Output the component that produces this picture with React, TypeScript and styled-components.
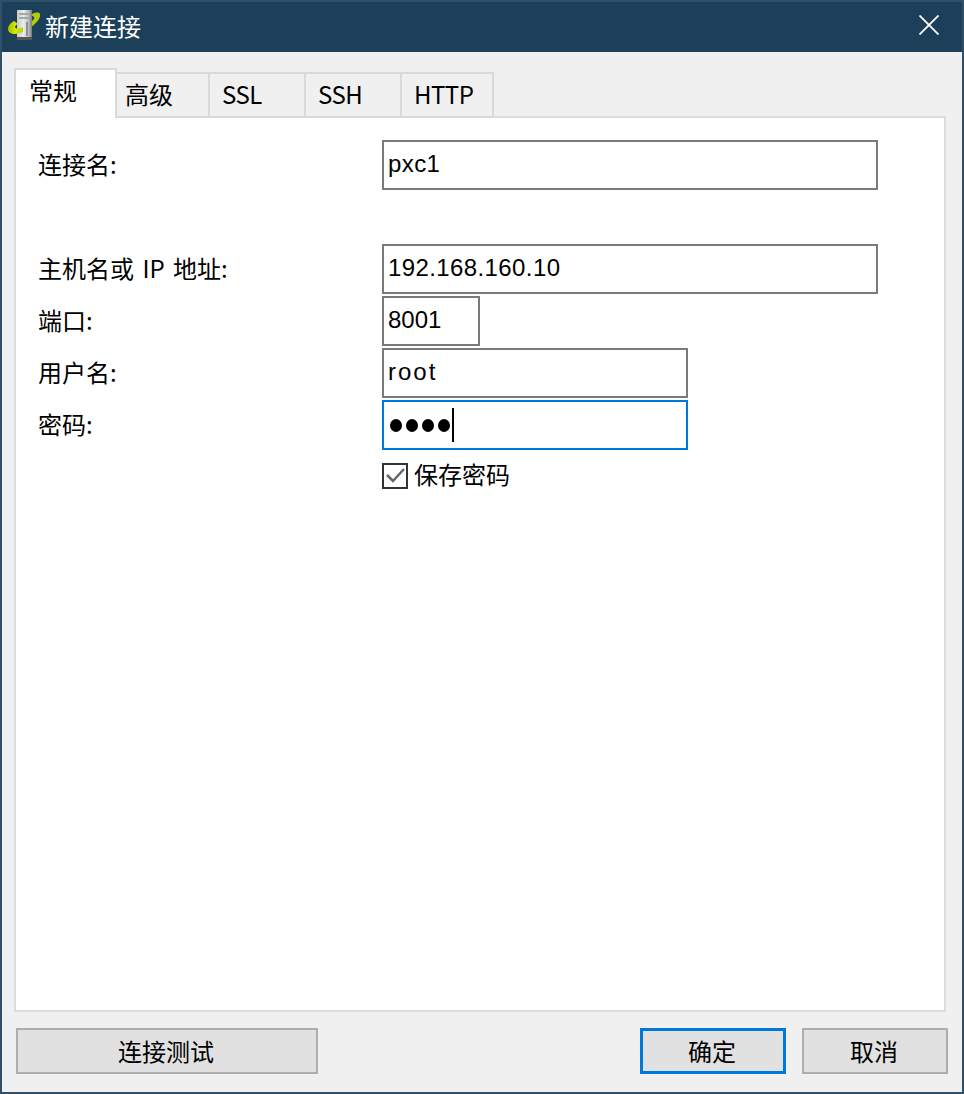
import React from 'react';
import styled, { createGlobalStyle } from 'styled-components';

const Global = createGlobalStyle`
  html, body {
    margin: 0;
    padding: 0;
    background: #2f5068;
  }
  * {
    box-sizing: border-box;
  }
`;

const fontStack = `"Noto Sans CJK SC", "Liberation Sans", sans-serif`;

const Window = styled.div`
  width: 964px;
  height: 1094px;
  display: flex;
  flex-direction: column;
  padding: 0 2px 2px 2px;
  background: #2f5068;
  border-top: 2px solid #2f5068;
  font-family: ${fontStack};
  font-size: 24px;
  color: #000;
`;

const TitleBar = styled.div`
  height: 50px;
  flex: none;
  display: flex;
  align-items: center;
  padding: 0 23px 0 6px;
  background: #1c405a;
  color: #fff;
`;

const IconSlot = styled.span`
  display: flex;
  margin-bottom: 4px;
`;

const TitleText = styled.span`
  margin: 0 0 2px 5px;
  font-size: 24px;
  line-height: 48px;
`;

const CloseButton = styled.button`
  margin: 0 0 4px auto;
  width: 20px;
  height: 20px;
  padding: 0;
  display: flex;
  border: 0;
  background: none;
`;

const Body = styled.div`
  flex: 1;
  display: flex;
  flex-direction: column;
  padding: 16px 16px 18px 12px;
  background: #f0f0f0;
`;

const TabBar = styled.div`
  display: flex;
  align-items: flex-end;
  height: 50px;
  flex: none;
  position: relative;
  z-index: 1;
`;

const Tab = styled.div<{ $width: number; $active?: boolean; $latin?: boolean }>`
  width: ${(p) => p.$width}px;
  height: ${(p) => (p.$active ? 50 : 46)}px;
  margin-left: -2px;
  padding: ${(p) => (p.$active ? '2px 0 0 13px' : p.$latin ? '2px 0 0 12px' : '2px 0 0 8px')};
  border: 2px solid #d9d9d9;
  border-bottom: ${(p) => (p.$active ? '0' : '2px solid #d9d9d9')};
  background: ${(p) => (p.$active ? '#fff' : '#f0f0f0')};
  line-height: 36px;
  letter-spacing: ${(p) => (p.$latin ? '-0.5px' : '0')};
  white-space: nowrap;
  &:first-child {
    margin-left: 0;
  }
  &:nth-child(2) {
    margin-left: 0;
    border-left: 0;
  }
`;

const Panel = styled.div`
  flex: 1;
  margin-top: -2px;
  padding: 22px 0 0 22px;
  border: 2px solid #dcdcdc;
  background: #fff;
`;

const Row = styled.div<{ $gapAfter?: number }>`
  display: flex;
  align-items: center;
  height: 50px;
  margin-bottom: ${(p) => p.$gapAfter ?? 2}px;
`;

const Label = styled.label`
  width: 344px;
  flex: none;
  padding-bottom: 2px;
  line-height: 48px;
  word-spacing: 3px;
`;

const Field = styled.div<{ $width: number; $focused?: boolean; $tracking?: number }>`
  width: ${(p) => p.$width}px;
  height: 50px;
  display: flex;
  align-items: center;
  padding: 0 4px 2px;
  border: 2px solid ${(p) => (p.$focused ? '#0078d7' : '#7a7a7a')};
  background: #fff;
  font-family: "Liberation Sans", sans-serif;
  font-size: 24px;
  letter-spacing: ${(p) => p.$tracking ?? 0}px;
`;

const Dot = styled.span`
  width: 12px;
  height: 13px;
  margin: 2px 4px 0 0;
  border-radius: 50%;
  background: #000;
  &:first-child {
    margin-left: 2px;
  }
`;

const Caret = styled.span`
  width: 2px;
  height: 34px;
  margin: 2px 0 0 -2px;
  background: #000;
`;

const CheckRow = styled.div`
  display: flex;
  align-items: center;
  margin: 12px 0 0 344px;
  height: 28px;
`;

const CheckBox = styled.span`
  width: 26px;
  height: 26px;
  flex: none;
  display: flex;
  border: 2px solid #333;
  background: #fff;
`;

const CheckLabel = styled.span`
  margin: 0 0 6px 6px;
`;

const Footer = styled.div`
  display: flex;
  margin-top: 16px;
  padding-left: 2px;
  margin-right: -2px;
  flex: none;
`;

const Button = styled.button<{ $width: number; $primary?: boolean }>`
  width: ${(p) => p.$width}px;
  height: 46px;
  padding: 0 2px 0 0;
  border: ${(p) => (p.$primary ? 3 : 2)}px solid ${(p) => (p.$primary ? '#0078d7' : '#adadad')};
  background: #e1e1e1;
  color: #000;
  font-family: ${fontStack};
  font-size: 24px;
  line-height: 1;
`;

const Spacer = styled.div`
  flex: 1;
`;

const CancelButton = styled(Button)`
  margin-left: 16px;
`;

const AppIcon = () => (
  <svg width="32" height="32" viewBox="0 0 32 32">
    <defs>
      <linearGradient id="srv" x1="0" x2="1" y1="0" y2="0">
        <stop offset="0" stopColor="#c9cbcb" />
        <stop offset="0.45" stopColor="#eceded" />
        <stop offset="0.8" stopColor="#b4b6b6" />
        <stop offset="1" stopColor="#77797a" />
      </linearGradient>
      <linearGradient id="ring" x1="0" x2="1" y1="0" y2="0">
        <stop offset="0" stopColor="#a6bd00" />
        <stop offset="0.5" stopColor="#d4ea00" />
        <stop offset="1" stopColor="#bcd200" />
      </linearGradient>
    </defs>
    <path d="M23 6 C27 3 31 3 32 5 C33 9 29 14 23 18 L23 13 C25 11 27 9 26 8Z" fill="#b5cb05" />
    <path d="M9 1 L24 1 L24 30 L9 30Z" fill="url(#srv)" />
    <rect x="9" y="28" width="15" height="3" fill="#55585a" />
    <rect x="11" y="4" width="11" height="2" fill="#a4a6a7" />
    <rect x="11" y="8" width="11" height="2" fill="#a4a6a7" />
    <rect x="18" y="13" width="2" height="14" fill="#8d9090" />
    <path d="M6 12 C2 14 0 17 0 20 C0 26 9 26 15 23 L15 18 C11 20 8 20 7 18 C7 17 8 16 10 15Z" fill="url(#ring)" />
  </svg>
);

const App = () => (
  <>
    <Global />
    <Window>
      <TitleBar>
        <IconSlot>
          <AppIcon />
        </IconSlot>
        <TitleText>新建连接</TitleText>
        <CloseButton aria-label="关闭">
          <svg width="20" height="20" viewBox="0 0 20 20">
            <path d="M0.5 0.5 L19.5 19.5 M19.5 0.5 L0.5 19.5" stroke="#fff" strokeWidth="1.8" />
          </svg>
        </CloseButton>
      </TitleBar>
      <Body>
        <TabBar>
          <Tab $width={103} $active>常规</Tab>
          <Tab $width={93}>高级</Tab>
          <Tab $width={98} $latin>SSL</Tab>
          <Tab $width={98} $latin>SSH</Tab>
          <Tab $width={94} $latin>HTTP</Tab>
        </TabBar>
        <Panel>
          <Row $gapAfter={54}>
            <Label>连接名:</Label>
            <Field $width={496} $tracking={0.4}>pxc1</Field>
          </Row>
          <Row>
            <Label>主机名或 IP 地址:</Label>
            <Field $width={496} $tracking={0.4}>192.168.160.10</Field>
          </Row>
          <Row>
            <Label>端口:</Label>
            <Field $width={98}>8001</Field>
          </Row>
          <Row>
            <Label>用户名:</Label>
            <Field $width={306} $tracking={2}>root</Field>
          </Row>
          <Row $gapAfter={0}>
            <Label>密码:</Label>
            <Field $width={306} $focused>
              <Dot />
              <Dot />
              <Dot />
              <Dot />
              <Caret />
            </Field>
          </Row>
          <CheckRow>
            <CheckBox>
              <svg width="22" height="22" viewBox="0 0 22 22">
                <path d="M3 10 L9 16 L20 4" fill="none" stroke="#666" strokeWidth="2.5" />
              </svg>
            </CheckBox>
            <CheckLabel>保存密码</CheckLabel>
          </CheckRow>
        </Panel>
        <Footer>
          <Button $width={302}>连接测试</Button>
          <Spacer />
          <Button $width={146} $primary>确定</Button>
          <CancelButton $width={146}>取消</CancelButton>
        </Footer>
      </Body>
    </Window>
  </>
);

export default App;
